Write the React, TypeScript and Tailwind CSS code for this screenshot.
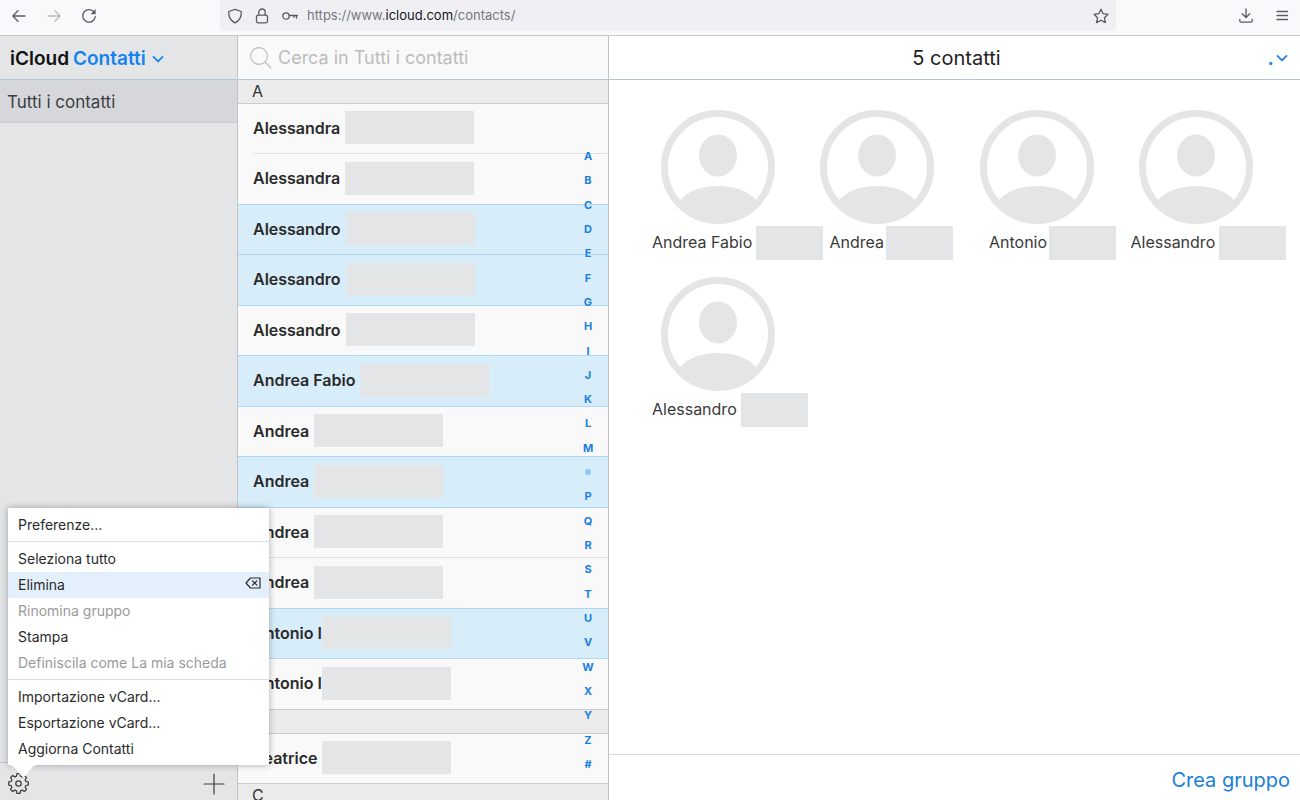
import { useState } from 'react';
import clsx from 'clsx';

type Contact = {
	id: number;
	name: string;
	tight?: boolean;
};

const groups: { letter: string; contacts: Contact[] }[] = [
	{
		letter: 'A',
		contacts: [
			{ id: 1, name: 'Alessandra' },
			{ id: 2, name: 'Alessandra' },
			{ id: 3, name: 'Alessandro' },
			{ id: 4, name: 'Alessandro' },
			{ id: 5, name: 'Alessandro' },
			{ id: 6, name: 'Andrea Fabio' },
			{ id: 7, name: 'Andrea' },
			{ id: 8, name: 'Andrea' },
			{ id: 9, name: 'Andrea' },
			{ id: 10, name: 'Andrea' },
			{ id: 11, name: 'Antonio I', tight: true },
			{ id: 12, name: 'Antonio I', tight: true },
		],
	},
	{ letter: 'B', contacts: [{ id: 13, name: 'Beatrice' }] },
	{ letter: 'C', contacts: [] },
];

const cards = [
	{ name: 'Andrea Fabio', wide: true },
	{ name: 'Andrea', wide: false },
	{ name: 'Antonio', wide: false },
	{ name: 'Alessandro', wide: true },
	{ name: 'Alessandro', wide: true },
];

const indexLetters = [...'ABCDEFGHIJKLM', '•', ...'PQRSTUVWXYZ#'];

const menuSections = [
	[{ label: 'Preferenze...' }],
	[
		{ label: 'Seleziona tutto' },
		{ label: 'Elimina', active: true },
		{ label: 'Rinomina gruppo', disabled: true },
		{ label: 'Stampa' },
		{ label: 'Definiscila come La mia scheda', disabled: true },
	],
	[
		{ label: 'Importazione vCard...' },
		{ label: 'Esportazione vCard...' },
		{ label: 'Aggiorna Contatti' },
	],
] as { label: string; active?: boolean; disabled?: boolean }[][];

const stroke = {
	fill: 'none',
	stroke: 'currentColor',
	strokeLinecap: 'round',
	strokeLinejoin: 'round',
} as const;

const Chevron = () => (
	<svg width="12" height="8" viewBox="0 0 12 8" {...stroke} strokeWidth="1.7">
		<path d="M1.5 1.8 6 6.300l4.500-4.500" />
	</svg>
);

const Avatar = () => (
	<svg width="114" height="114" viewBox="0 0 114 114" fill="#e5e5e5">
		<circle cx="57" cy="57" r="53.5" fill="none" stroke="#e5e5e5" strokeWidth="7" />
		<ellipse cx="57" cy="45.5" rx="19" ry="21" />
		<path d="M18.5 91C26 81 41 76 57 76s31 5 38.5 15A53 53 0 0 1 57 110 53 53 0 0 1 18.5 91Z" />
	</svg>
);

const Toolbar = () => (
	<div className="flex h-9 shrink-0 border-b border-[#c9c9cc] bg-[#f9f9fb] text-[#5b5b66]">
		<div className="flex w-[220px] items-center gap-[19px] pl-[11px] pb-1">
			<button aria-label="Indietro">
				<svg width="16" height="16" viewBox="0 0 16 16" {...stroke} strokeWidth="1.3">
					<path d="M14 8H1.8M7 2.8 1.8 8 7 13.2" />
				</svg>
			</button>
			<button aria-label="Avanti" className="text-[#b9b9bf]">
				<svg width="16" height="16" viewBox="0 0 16 16" {...stroke} strokeWidth="1.3">
					<path d="M2 8h12.2M9 2.8 14.2 8 9 13.2" />
				</svg>
			</button>
			<button aria-label="Ricarica">
				<svg width="16" height="16" viewBox="0 0 16 16" {...stroke} strokeWidth="1.3">
					<path d="M13.6 4.9A6.3 6.3 0 1 0 14.3 8.500" />
					<path d="M14.400 1.600V6H10Z" fill="currentColor" strokeWidth=".4" />
				</svg>
			</button>
		</div>
		<div className="mb-1 flex flex-1 items-center rounded-b bg-[#f0f0f4] px-[7px]">
			<svg width="16" height="16" viewBox="0 0 16 16" {...stroke} strokeWidth="1.3">
				<path d="M8 1.300 14.300 3.500C14.500 9 12.500 12.800 8 14.800 3.500 12.800 1.500 9 1.700 3.500Z" />
			</svg>
			<svg className="ml-[11px]" width="16" height="16" viewBox="0 0 16 16" {...stroke} strokeWidth="1.3">
				<rect x="2.500" y="7.200" width="11" height="7.600" rx="1.500" />
				<path d="M4.800 7V4.200a3.200 3.200 0 0 1 6.400 0V7" />
			</svg>
			<svg className="ml-[11px]" width="18" height="16" viewBox="0 0 18 16" {...stroke} strokeWidth="1.3">
				<circle cx="5" cy="8" r="3.200" />
				<path d="M8.300 7.500h8M15.500 7.500v2.500M13 7.500v1.800" />
			</svg>
			<div className="ml-2 flex-1 pt-px text-[13px] text-[#77777f]">
				https://www.<span className="text-[#15141a]">icloud.com</span>/contacts/
			</div>
			<button aria-label="Aggiungi ai segnalibri">
				<svg width="16" height="16" viewBox="0 0 16 16" {...stroke} strokeWidth="1.300">
					<path d="m8 1.200 2.100 4.500 4.900.6-3.600 3.400 1 4.900L8 12.200l-4.400 2.400 1-4.900L1 6.300l4.900-.6Z" />
				</svg>
			</button>
		</div>
		<div className="flex w-[184px] items-center justify-end gap-5 pb-1 pr-2.5">
			<button aria-label="Download">
				<svg width="16" height="16" viewBox="0 0 16 16" {...stroke} strokeWidth="1.3">
					<path d="M8 1v8.300M4.200 5.700 8 9.500l3.800-3.800M1.800 11.500v1.300c0 .8.500 1.300 1.300 1.300h9.800c.8 0 1.300-.5 1.300-1.300v-1.300" />
				</svg>
			</button>
			<button aria-label="Menu">
				<svg width="16" height="16" viewBox="0 0 16 16" {...stroke} strokeWidth="1.3">
					<path d="M3 3.500h10.500M3 7.500h10.500M3 11.500h10.500" />
				</svg>
			</button>
		</div>
	</div>
);

const SettingsMenu = () => (
	<div
		role="menu"
		className="absolute bottom-[35px] left-2 z-20 w-[261px] bg-white text-sm text-[#2b2b2b] shadow-[0_0_7px_rgba(0,0,0,0.3)]"
	>
		{menuSections.map((section, i) => (
			<div key={i} className={clsx('pt-1 pb-[3px]', i > 0 && 'border-t border-[#dedede]')}>
				{section.map((item) => (
					<button
						key={item.label}
						role="menuitem"
						disabled={item.disabled}
						className={clsx(
							'flex h-[26px] w-full items-center justify-between pl-2.5 pr-2',
							item.active && 'bg-[#e3f0fc]',
							item.disabled && 'text-[#9a9a9a]'
						)}
					>
						{item.label}
						{item.active && (
							<svg className="mb-1" width="16" height="12" viewBox="0 0 16 12" {...stroke} strokeWidth="1.200">
								<path d="M5.500 1H15v10H5.500L1 6ZM7.500 3.800l4.400 4.400M11.900 3.800 7.500 8.200" />
							</svg>
						)}
					</button>
				))}
			</div>
		))}
		<svg className="absolute top-full left-0" width="30" height="13" viewBox="0 0 30 13" fill="#fff">
			<path d="M0 0h30c-4 0-6 2-8 5l-5 6c-1 1.300-2.500 1.300-3.500 0L8.500 5C6.500 2 4 0 0 0Z" />
		</svg>
	</div>
);

const Gear = () => (
	<svg width="23" height="23" viewBox="0 0 24 24" {...stroke} strokeWidth="1.300">
		<path d="M10.4 1.800h3.200l.5 2.500 1.800.8 2.200-1.500 2.300 2.300-1.500 2.200.8 1.800 2.500.5v3.200l-2.500.5-.8 1.800 1.500 2.200-2.300 2.300-2.200-1.500-1.800.8-.5 2.500h-3.200l-.5-2.500-1.800-.8-2.200 1.500-2.300-2.300 1.500-2.200-.8-1.800-2.500-.5v-3.200l2.500-.5.8-1.800-1.500-2.200 2.300-2.300 2.200 1.500 1.800-.8Z" />
		<circle cx="12" cy="12" r="2.800" />
	</svg>
);

const Sidebar = () => (
	<aside className="relative flex w-[238px] shrink-0 flex-col border-r border-[#c3c4c8] bg-[#e4e5e7]">
		<div className="flex h-11 items-center gap-1 border-b border-[#b3c5da] pt-[3px] pl-2.5 text-[19px] font-semibold">
			<span className="text-[#111]">iCloud</span>
			<button className="flex items-center gap-1.5 text-[#1482ee]">
				Contatti
				<Chevron />
			</button>
		</div>
		<button className="h-[43px] border-b border-[#cbccd0] bg-[#d6d7db] pt-[3px] pl-[7px] text-left text-[17px] text-[#3d3d3f]">
			Tutti i contatti
		</button>
		<div className="mt-auto flex h-[38px] items-center justify-between border-t border-[#c3c4c8] pl-[7px] pr-3 pt-1 text-[#3c3c3e]">
			<button aria-label="Impostazioni">
				<Gear />
			</button>
			<button aria-label="Aggiungi">
				<svg width="22" height="22" viewBox="0 0 22 22" {...stroke} strokeWidth="1.200">
					<path d="M11 1v20M1 11h20" />
				</svg>
			</button>
		</div>
		<SettingsMenu />
	</aside>
);

const ContactList = () => {
	const [selected, setSelected] = useState([3, 4, 6, 8, 11]);

	const getLine = (contacts: Contact[], i: number) => {
		const next = contacts[i + 1];
		if (selected.includes(contacts[i].id) || (next && selected.includes(next.id))) {
			return 'bg-[#aed8ee]';
		}
		return next ? 'ml-[15px] bg-[#e2e2e2]' : 'bg-[#cccccc]';
	};

	return (
		<section className="flex w-[371px] shrink-0 flex-col border-r border-[#c3c4c8] bg-[#f9f9f9]">
			<label className="flex h-11 shrink-0 items-center gap-1.5 border-b border-[#b3c5da] pl-3 text-[#bcbcbe]">
				<svg width="22" height="22" viewBox="0 0 22 22" {...stroke} strokeWidth="1.100">
					<path d="M15.500 15.500 21 21" />
					<circle cx="9" cy="9" r="8.400" />
				</svg>
				<input
					type="search"
					aria-label="Cerca"
					placeholder="Cerca in Tutti i contatti"
					className="flex-1 bg-transparent text-lg outline-none placeholder:text-[#bcbcbe]"
				/>
			</label>
			<div className="relative flex-1 overflow-hidden">
				{groups.map((group) => (
					<div key={group.letter}>
						<h2 className="h-6 border-b border-[#cccccc] bg-[#ebebeb] pl-3.5 text-base leading-[23px] text-[#333]">
							{group.letter}
						</h2>
						<ul>
							{group.contacts.map((contact, i) => (
								<li
									key={contact.id}
									className={clsx(
										'flex flex-col odd:h-[50px] even:h-[51px]',
										selected.includes(contact.id) && 'bg-[#d8edfa]'
									)}
								>
									<button
										onClick={() => setSelected([contact.id])}
										className={clsx(
											'flex flex-1 items-center pb-0.5 pl-[15px] text-base font-semibold text-[#2a2a2a]',
											!contact.tight && 'gap-[5px]'
										)}
									>
										{contact.name}
										<span className="h-[33px] w-[129px] bg-[#e4e5e7]" />
									</button>
									<div className={clsx('h-px', getLine(group.contacts, i))} />
								</li>
							))}
						</ul>
					</div>
				))}
				<nav className="absolute top-[68px] right-3 bottom-7 flex w-4 flex-col items-center justify-between text-[11px] leading-4 font-bold text-[#1a80e0]">
					{indexLetters.map((letter) =>
						letter === '•' ? (
							<span key={letter} className="flex h-4 items-center">
								<span className="size-1.5 rounded-full bg-[#94c8f4]" />
							</span>
						) : (
							<a key={letter} href={`#${letter}`}>
								{letter}
							</a>
						)
					)}
				</nav>
			</div>
		</section>
	);
};

const Details = () => (
	<main className="flex min-w-0 flex-1 flex-col bg-white">
		<header className="grid h-11 shrink-0 grid-cols-[1fr_auto_1fr] items-center border-b border-[#b3c5da] pr-3 pl-4">
			<h1 className="col-start-2 text-xl text-[#222]">5 contatti</h1>
			<button aria-label="Azioni" className="flex items-center gap-0.5 justify-self-end text-xl font-semibold text-[#1a80e0]">
				.
				<Chevron />
			</button>
		</header>
		<div className="grid flex-1 grid-cols-4 content-start gap-y-[17px] pt-[30px] pr-6 pl-[29px]">
			{cards.map((card, i) => (
				<div key={i} className="flex min-w-0 flex-col gap-0.5">
					<div className="flex justify-center">
						<Avatar />
					</div>
					<div
						className={clsx(
							'flex text-base leading-8 whitespace-nowrap text-[#3a3a3a]',
							card.wide ? 'gap-1 pl-3.5' : 'gap-0.5 pl-8'
						)}
					>
						{card.name}
						<span className="h-[34px] w-[67px] shrink-0 bg-[#e4e5e7]" />
					</div>
				</div>
			))}
		</div>
		<footer className="flex h-[46px] shrink-0 justify-end border-t border-[#d9d9d9] px-2.5 pt-1">
			<button className="text-xl text-[#1a80d8]">Crea gruppo</button>
		</footer>
	</main>
);

const App = () => (
	<div className="flex h-screen flex-col overflow-hidden font-['Inter',sans-serif]">
		<Toolbar />
		<div className="flex min-h-0 flex-1">
			<Sidebar />
			<ContactList />
			<Details />
		</div>
	</div>
);

export default App;
